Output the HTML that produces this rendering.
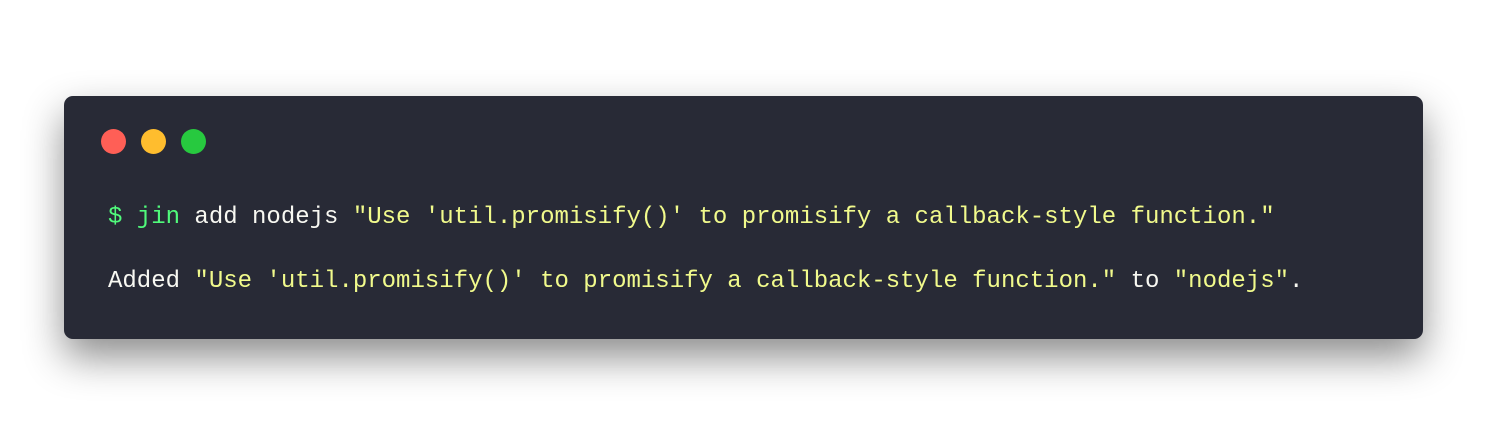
<!DOCTYPE html>
<html><head><meta charset="utf-8"><style>
html,body{margin:0;padding:0;background:#fff;width:1488px;height:438px;overflow:hidden}
.card{position:absolute;left:64px;top:96px;width:1359px;height:243px;background:#282a36;border-radius:9px;box-shadow:0 18px 40px rgba(0,0,0,0.45)}
.dot{position:absolute;top:33px;width:25px;height:25px;border-radius:50%}
.t{position:absolute;left:44px;font-family:"Liberation Mono","DejaVu Sans Mono",monospace;font-size:24px;line-height:30px;color:#f8f8f2;white-space:pre}
.g{color:#50fa7b}.y{color:#f1fa8c}
</style></head><body>
<div class="card">
<div class="dot" style="left:37px;background:#ff5f56"></div>
<div class="dot" style="left:77px;background:#ffbd2e"></div>
<div class="dot" style="left:117px;background:#27c93f"></div>
<div class="t" style="top:107px"><span class="g">$ jin</span> add nodejs <span class="y">"Use 'util.promisify()' to promisify a callback-style function."</span></div>
<div class="t" style="top:171px">Added <span class="y">"Use 'util.promisify()' to promisify a callback-style function."</span> to <span class="y">"nodejs"</span>.</div>
</div>
</body></html>
